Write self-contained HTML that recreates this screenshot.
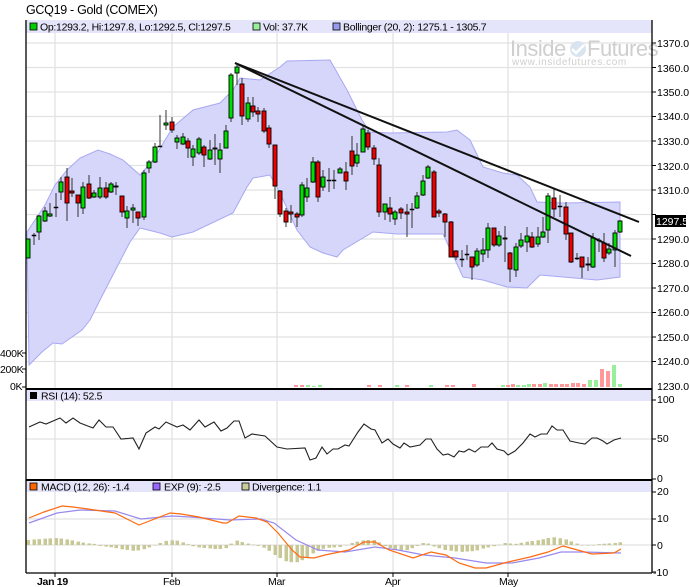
<!DOCTYPE html>
<html><head><meta charset="utf-8">
<style>
html,body{margin:0;padding:0;background:#fff;}
svg{display:block;font-family:"Liberation Sans",Arial,sans-serif;}
text{font-size:10.5px;fill:#000;}
</style></head>
<body>
<svg id="c" width="689" height="587" viewBox="0 0 689 587" xmlns="http://www.w3.org/2000/svg">
<rect width="689" height="587" fill="#fff"/>
<text x="26" y="14" style="font-size:12.5px" letter-spacing="-0.3">GCQ19 - Gold (COMEX)</text>
<g id="grid" stroke="#e2e2e2" stroke-width="1.3"></g>
<!-- legend bands -->
<rect x="26" y="20" width="626" height="13" fill="#e4e4fa"/>
<rect x="26" y="390" width="626" height="11" fill="#e4e4fa"/>
<rect x="26" y="481" width="626" height="11" fill="#e4e4fa"/>
<g id="band"></g>
<g id="vol"></g>
<g id="cand"></g>
<g id="tl" stroke="#111" stroke-width="2" fill="none">
<line x1="235" y1="63" x2="639" y2="222"/>
<line x1="235" y1="63" x2="631" y2="256"/>
</g>
<g id="rsi"></g>
<g id="macd"></g>
<!-- watermark -->
<text x="510" y="56" style="font-size:22px;fill:#cfcfcf" letter-spacing="-0.5">Inside</text>
<circle cx="578" cy="49" r="8" fill="#d8e4f0"/>
<path d="M572 49 l4 4 l8 -8" stroke="#fff" stroke-width="2.5" fill="none"/>
<text x="587" y="56" style="font-size:22px;fill:#cfcfcf" letter-spacing="-0.5">Futures</text>
<text x="512" y="65" style="font-size:10px;fill:#cfcfcf" letter-spacing="0.6">www.insidefutures.com</text>
<!-- frames -->
<g stroke="#000" stroke-width="1.3" fill="none">
<line x1="26" y1="20" x2="26" y2="573"/>
<line x1="652" y1="20" x2="652" y2="573"/>
<line x1="26" y1="573" x2="652" y2="573"/>
</g>
<line x1="26" y1="389" x2="652" y2="389" stroke="#000" stroke-width="2"/>
<line x1="26" y1="480" x2="652" y2="480" stroke="#000" stroke-width="2"/>
<g id="ax"></g>
<!-- legends -->
<g>
<rect x="30" y="23" width="7" height="7" fill="#00cc00" stroke="#000" stroke-width="0.8"/>
<text x="40" y="30.5" letter-spacing="-0.3">Op:1293.2, Hi:1297.8, Lo:1292.5, Cl:1297.5</text>
<rect x="253" y="23" width="7" height="7" fill="#99ee99" stroke="#000" stroke-width="0.8"/>
<text x="263" y="30.5" letter-spacing="-0.3">Vol: 37.7K</text>
<rect x="333" y="23" width="7" height="7" fill="#9999ee" stroke="#000" stroke-width="0.8"/>
<text x="343" y="30.5" letter-spacing="-0.3">Bollinger (20, 2): 1275.1 - 1305.7</text>
<rect x="30" y="392" width="7" height="7" fill="#000"/>
<text x="41" y="399.5" letter-spacing="-0.3">RSI (14): 52.5</text>
<rect x="30" y="483" width="7" height="7" fill="#ff6600" stroke="#000" stroke-width="0.8"/>
<text x="41" y="490.5" letter-spacing="-0.3">MACD (12, 26): -1.4</text>
<rect x="153" y="483" width="7" height="7" fill="#9966ff" stroke="#000" stroke-width="0.8"/>
<text x="164" y="490.5" letter-spacing="-0.3">EXP (9): -2.5</text>
<rect x="242" y="483" width="7" height="7" fill="#cccc99" stroke="#000" stroke-width="0.8"/>
<text x="252" y="490.5" letter-spacing="-0.3">Divergence: 1.1</text>
</g>
<g>
<text x="37" y="585" style="font-weight:bold" letter-spacing="-0.3">Jan 19</text>
<text x="163" y="585" letter-spacing="-0.3">Feb</text>
<text x="268" y="585" letter-spacing="-0.3">Mar</text>
<text x="385" y="585" letter-spacing="-0.3">Apr</text>
<text x="499" y="585" letter-spacing="-0.3">May</text>
</g>
<g id="lbl">
<text x="657" y="47">1370.0</text><text x="657" y="72">1360.0</text><text x="657" y="96">1350.0</text>
<text x="657" y="120">1340.0</text><text x="657" y="145">1330.0</text><text x="657" y="170">1320.0</text>
<text x="657" y="194">1310.0</text><text x="657" y="243">1290.0</text><text x="657" y="267">1280.0</text>
<text x="657" y="292">1270.0</text><text x="657" y="316">1260.0</text><text x="657" y="341">1250.0</text>
<text x="657" y="365">1240.0</text><text x="657" y="390">1230.0</text>
<rect x="655" y="215" width="31" height="12" fill="#000"/>
<text x="656" y="225" style="fill:#fff">1297.5</text>
<text x="0" y="357" letter-spacing="-0.3">400K</text><text x="0" y="373" letter-spacing="-0.3">200K</text><text x="10" y="390" letter-spacing="-0.3">0K</text>
<text x="657" y="403">100</text><text x="657" y="442">50</text><text x="657" y="482">0</text>
<text x="657" y="495">20</text><text x="657" y="522">10</text><text x="657" y="549">0</text><text x="653" y="576">-10</text>
</g>
</svg>
<script>
var NS="http://www.w3.org/2000/svg";
function el(p,t,a){var e=document.createElementNS(NS,t);for(var k in a)e.setAttribute(k,a[k]);document.getElementById(p).appendChild(e);return e;}
// grid
var py=[43,67.5,92,116.5,141,165.5,190,214.5,239,263.5,288,312.5,337,361.5];
py.forEach(function(y){el("grid","line",{x1:26,x2:652,y1:y,y2:y});el("ax","line",{x1:652,x2:656,y1:y,y2:y,stroke:"#000"});});
[439].forEach(function(y){el("grid","line",{x1:26,x2:652,y1:y,y2:y});});
[519,545].forEach(function(y){el("grid","line",{x1:26,x2:652,y1:y,y2:y});});
[55,172,277,393,508].forEach(function(x){el("grid","line",{x1:x,x2:x,y1:33,y2:573});el("ax","line",{x1:x,x2:x,y1:573,y2:577,stroke:"#000"});});
[400,439,479,492,519,545,572].forEach(function(y){el("ax","line",{x1:652,x2:656,y1:y,y2:y,stroke:"#000"});});
[353,369,387].forEach(function(y){el("ax","line",{x1:22,x2:26,y1:y,y2:y,stroke:"#000"});});
// bollinger
var up=[[27,232],[45,205],[55,185],[67,170],[80,158],[98,150],[110,154],[123,160],[140,175],[153,160],[173,127],[193,110],[220,103],[233,90],[240,78],[260,80],[280,67],[287,61],[330,60],[347,90],[362,120],[370,132],[390,133],[447,132],[457,130],[470,140],[483,167],[503,173],[517,175],[530,187],[537,202],[563,203],[620,202]];
var lo=[[29,365],[42,352],[53,343],[62,344],[82,330],[90,320],[100,300],[117,267],[130,242],[140,228],[160,233],[172,237],[193,232],[233,213],[247,187],[253,178],[270,175],[280,193],[297,230],[310,247],[323,253],[337,257],[343,250],[373,232],[397,234],[443,234],[463,277],[483,280],[507,287],[527,288],[540,275],[563,277],[597,280],[620,277]];
var pts=up.map(function(p){return p.join(",")}).concat(lo.slice().reverse().map(function(p){return p.join(",")}));
el("band","polygon",{points:pts.join(" "),fill:"#d6d6fa",stroke:"#a8a8f2","stroke-width":1});
// candles [x, bodyTop, bodyBot, wickTop, wickBot, g/r/d]
var C=[[28,239,258,239,258,"g"],[34,235,236,233,245,"d"],[39,216,232,215,240,"g"],[45,211,221,207,222,"g"],[50,214,216,203,217,"g"],[56,207,207,193,217,"d"],[61,182,192,177,200,"g"],[67,177,203,168,221,"r"],[72,191,193,178,197,"r"],[78,195,203,195,217,"r"],[83,187,208,182,214,"g"],[89,184,198,175,199,"r"],[94,193,197,190,198,"g"],[100,188,197,177,199,"g"],[106,188,197,182,199,"r"],[111,184,192,182,193,"g"],[116,186,187,182,195,"r"],[122,196,212,196,217,"r"],[127,211,218,206,228,"g"],[133,208,210,204,223,"g"],[138,212,218,212,226,"r"],[144,173,217,170,220,"g"],[149,162,168,160,173,"g"],[155,147,162,143,163,"g"],[160,146,146,115,146,"d"],[166,123,125,110,130,"g"],[172,122,130,117,133,"r"],[177,138,142,135,149,"g"],[183,137,144,133,145,"g"],[188,141,148,138,158,"r"],[193,149,157,145,166,"g"],[199,139,153,137,155,"g"],[204,147,155,145,167,"r"],[210,150,159,140,160,"g"],[215,148,149,134,165,"g"],[220,150,159,143,173,"g"],[226,131,148,125,148,"g"],[231,75,118,73,122,"g"],[237,67,73,65,85,"g"],[242,84,116,78,125,"r"],[248,103,119,97,122,"g"],[253,106,112,97,117,"r"],[258,111,114,107,122,"r"],[264,111,131,108,133,"r"],[269,128,144,125,148,"r"],[275,145,186,145,199,"r"],[280,191,214,190,217,"r"],[286,211,222,208,227,"r"],[291,212,214,205,223,"r"],[297,214,217,212,227,"r"],[302,185,215,182,217,"g"],[307,188,197,178,202,"g"],[313,162,182,157,183,"g"],[318,162,197,160,202,"r"],[323,177,187,170,191,"g"],[329,180,180,168,192,"d"],[334,180,180,170,189,"d"],[340,169,173,167,173,"g"],[346,172,181,162,190,"r"],[352,151,166,136,175,"r"],[357,155,163,143,167,"g"],[363,129,152,125,152,"g"],[368,133,147,130,150,"r"],[374,148,159,145,165,"r"],[379,165,212,158,217,"r"],[385,204,212,204,220,"g"],[390,208,214,197,222,"r"],[395,212,219,210,225,"g"],[401,209,213,207,219,"r"],[407,212,214,204,237,"r"],[412,209,209,203,228,"d"],[417,196,208,192,209,"g"],[423,181,195,175,196,"g"],[428,167,178,165,179,"g"],[434,172,217,170,217,"r"],[439,211,213,209,217,"r"],[445,214,222,213,237,"r"],[451,222,257,221,257,"r"],[456,251,257,250,260,"r"],[462,259,259,250,267,"d"],[467,254,254,245,260,"d"],[472,257,267,257,280,"r"],[477,251,265,248,267,"g"],[483,250,254,238,262,"g"],[488,228,250,223,258,"g"],[494,228,245,228,247,"r"],[499,236,245,231,247,"g"],[505,238,239,226,262,"r"],[510,253,269,252,282,"r"],[516,247,270,243,277,"g"],[521,240,246,233,248,"g"],[527,236,242,227,252,"g"],[532,237,247,232,248,"r"],[538,237,244,227,247,"g"],[543,232,237,217,238,"g"],[548,196,230,193,243,"g"],[554,198,209,188,217,"r"],[560,206,206,195,217,"d"],[566,207,234,202,240,"r"],[571,233,262,233,263,"r"],[577,258,258,253,260,"d"],[582,257,267,257,278,"r"],[588,264,265,257,271,"r"],[593,238,267,233,268,"g"],[599,240,240,238,252,"d"],[604,243,258,233,262,"r"],[609,249,253,243,255,"g"],[615,233,250,230,267,"g"],[620,221,232,220,233,"g"]];
C.forEach(function(c){
 el("cand","line",{x1:c[0],x2:c[0],y1:c[3],y2:c[4],stroke:"#333","stroke-width":1});
 var f=c[5]=="g"?"#00e000":c[5]=="r"?"#ee0000":"#000";
 var h=Math.max(c[2]-c[1],1);
 el("cand","rect",{x:c[0]-2,y:c[1],width:4,height:h,fill:f,stroke:"#000","stroke-width":c[5]=="d"?0.5:0.9});
});
// volume
var V=[[296,2,"r"],[302,2,"r"],[308,2,"g"],[314,1,"g"],[320,2,"g"],[369,2,"r"],[380,2,"r"],[397,2,"g"],[407,2,"r"],[431,2,"g"],[447,2,"r"],[453,2,"r"],[474,3,"r"],[503,2,"g"],[508,2,"r"],[513,3,"r"],[518,2,"g"],[524,2,"g"],[529,3,"g"],[534,3,"r"],[540,3,"r"],[545,4,"g"],[551,3,"r"],[556,3,"r"],[562,3,"r"],[567,3,"r"],[573,4,"r"],[578,4,"r"],[584,3,"r"],[590,7,"g"],[596,7,"g"],[602,18,"r"],[608,16,"r"],[614,22,"g"],[620,3,"g"]];
V.forEach(function(v){el("vol","rect",{x:v[0]-2,y:387-v[1],width:4,height:v[1],fill:v[2]=="g"?"#99ee99":"#ff9999"});});
// RSI
var R="29,427 40,422 46,424 60,418 66,423 73,418 80,423 93,428 99,420 106,427 113,427 121,439 133,438 139,449 146,433 155,427 159,429 166,422 177,427 183,425 190,430 199,420 205,427 214,422 221,431 227,428 234,421 239,421 245,438 252,434 265,436 277,447 287,449 305,448 310,460 316,458 322,447 327,454 333,449 338,449 345,445 349,446 358,432 364,424 371,429 375,430 382,443 388,439 393,444 400,448 404,443 410,447 420,445 426,439 431,439 437,449 443,455 448,454 454,457 459,451 464,452 469,449 475,452 481,447 488,447 492,443 497,449 504,451 508,455 515,451 523,443 530,434 535,437 541,434 547,434 552,426 557,430 563,430 570,441 579,443 585,444 592,438 597,438 603,441 607,444 614,440 621,438";
el("rsi","polyline",{points:R,fill:"none",stroke:"#222","stroke-width":1.1});
// divergence
var D=[[27,5],[40,6],[55,7],[65,6],[75,4],[85,2],[95,1],[100,-1],[110,-2],[120,-4],[135,-6],[145,-4],[155,0],[165,4],[175,5],[185,2],[195,-2],[215,-4],[225,-4],[235,5],[245,2],[255,0],[265,-3],[275,-10],[285,-16],[295,-18],[305,-14],[315,-7],[325,-3],[340,-2],[355,3],[365,5],[375,5],[385,-1],[395,-5],[405,-6],[415,-2],[425,3],[435,-2],[445,-5],[460,-7],[475,-6],[485,-3],[495,-1],[505,2],[515,1],[525,3],[540,5],[552,8],[565,6],[575,2],[585,-1],[600,1],[615,2],[622,3]];
function interp(x){for(var i=0;i<D.length-1;i++){if(x>=D[i][0]&&x<=D[i+1][0]){var t=(x-D[i][0])/(D[i+1][0]-D[i][0]);return D[i][1]+t*(D[i+1][1]-D[i][1]);}}return D[D.length-1][1];}
C.forEach(function(c){var h=interp(c[0]);var y=h>0?545-h:545;el("macd","rect",{x:c[0]-1.5,y:y,width:3.5,height:Math.max(Math.abs(h),0.5),fill:"#c8c896"});});
var E="29,523 57,513 80,510 115,511 141,519 172,516 190,517 230,520 261,519 274,523 296,540 318,550 345,552 375,547 398,550 424,555 455,558 486,563 512,563 539,558 561,552 583,552 621,553";
var M="29,518 44,512 62,506 73,507 88,509 115,513 139,525 152,520 170,513 181,514 199,517 223,523 227,523 239,516 256,518 267,522 278,533 292,550 300,557 314,558 325,555 349,550 364,542 375,542 389,550 413,558 431,552 446,555 459,563 475,568 486,568 508,562 530,557 548,552 563,546 574,549 592,554 614,553 621,549";
el("macd","polyline",{points:E,fill:"none",stroke:"#9988ee","stroke-width":1.2});
el("macd","polyline",{points:M,fill:"none",stroke:"#ff6a10","stroke-width":1.2});
</script>
</body></html>
